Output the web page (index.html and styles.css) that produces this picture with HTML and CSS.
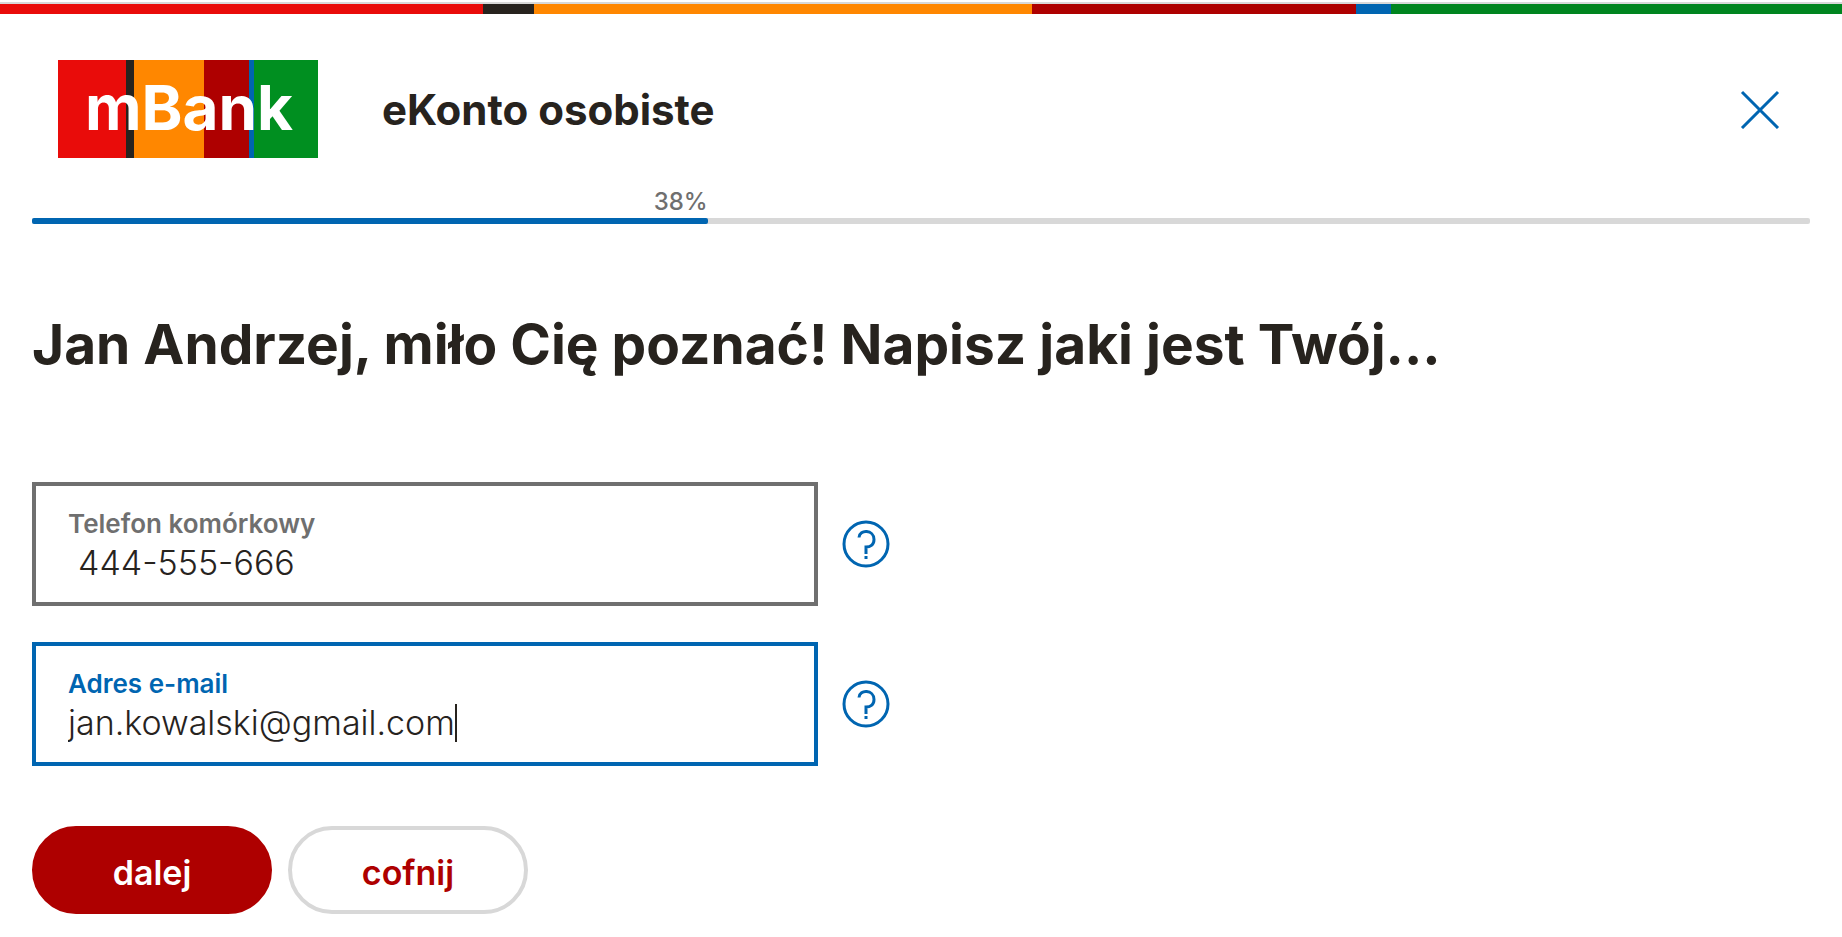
FILE: index.html
```html
<!DOCTYPE html>
<html lang="pl">
<head>
<meta charset="utf-8">
<meta name="viewport" content="width=device-width, initial-scale=1">
<title>eKonto osobiste</title>
<link rel="stylesheet" href="styles.css">
</head>
<body>
<div class="brand-bar"></div>
<header class="header">
  <svg class="logo" viewBox="0 0 260 98" role="img" aria-label="mBank">
    <rect width="68" height="98" fill="#e90c0a"/>
    <rect x="68" width="8" height="98" fill="#27231e"/>
    <rect x="76" width="70" height="98" fill="#ff8700"/>
    <rect x="146" width="45" height="98" fill="#ae0000"/>
    <rect x="191" width="5" height="98" fill="#0065b1"/>
    <rect x="196" width="64" height="98" fill="#008f20"/>
    <text class="logo-text" x="131" y="70" text-anchor="middle">mBank</text>
  </svg>
  <p class="product">eKonto osobiste</p>
  <button class="close" type="button" aria-label="Zamknij">
    <svg width="40" height="40" viewBox="0 0 40 40"><path d="M2 3 38 39M38 3 2 39"/></svg>
  </button>
</header>
<main class="content">
  <div class="progress">
    <div class="progress-label" style="width:38%">38%</div>
    <div class="progress-track"><div class="progress-fill" style="width:38%"></div></div>
  </div>
  <h1 class="title">Jan Andrzej, miło Cię poznać! Napisz jaki jest Twój...</h1>
  <form class="form">
    <div class="row">
      <div class="field">
        <label class="label" for="phone">Telefon komórkowy</label>
        <div class="entry entry-phone"><input class="value" id="phone" type="tel" value="444-555-666"></div>
      </div>
      <button class="help" type="button" aria-label="Pomoc: telefon komórkowy">
        <svg width="48" height="48" viewBox="0 0 48 48"><circle cx="24" cy="24" r="22"/><path d="M17 17.500C17.500 9 32 9.500 32 19.500C32 25 28 27 24 27V34M24 36V39"/></svg>
      </button>
    </div>
    <div class="row">
      <div class="field field-active">
        <label class="label" for="email">Adres e-mail</label>
        <div class="entry"><input class="value" id="email" type="email" value="jan.kowalski@gmail.com"><span class="caret"></span></div>
      </div>
      <button class="help" type="button" aria-label="Pomoc: adres e-mail">
        <svg width="48" height="48" viewBox="0 0 48 48"><circle cx="24" cy="24" r="22"/><path d="M17 17.500C17.500 9 32 9.500 32 19.500C32 25 28 27 24 27V34M24 36V39"/></svg>
      </button>
    </div>
    <div class="actions">
      <button class="button button-primary" type="submit">dalej</button>
      <button class="button" type="button">cofnij</button>
    </div>
  </form>
</main>
</body>
</html>
```

FILE: styles.css
```css
* { box-sizing: border-box; }
body {
  margin: 0;
  padding-top: 2px;
  background: #fff;
  color: #27231e;
  font-family: Inter, "Open Sans", sans-serif;
}
button, input { font: inherit; }
.brand-bar {
  height: 12px;
  border-top: 2px solid #d8d8d8;
  background: linear-gradient(to right, #e90c0a 26.22%, #27231e 26.22% 29%, #ff8700 29% 56.03%, #ae0000 56.03% 73.62%, #0065b1 73.62% 75.52%, #00851f 75.52%);
}
.header {
  display: flex;
  align-items: center;
  padding: 46px 58px 0;
}
.logo { width: 260px; height: 98px; flex: none; }
.logo-text { font-family: Inter, sans-serif; font-size: 62px; font-weight: 700; fill: #fff; }
.product {
  margin: 0 0 0 64px;
  padding-top: 2px;
  font-size: 42px;
  line-height: 52px;
  font-weight: 700;
}
.close, .help {
  display: flex;
  padding: 0;
  border: 0;
  background: none;
  cursor: pointer;
}
.close { margin-left: auto; margin-right: 4px; }
.close svg, .help svg { fill: none; stroke: #0065b1; stroke-width: 3; }
.content { padding: 0 32px; }
.progress { padding-top: 28px; }
.progress-label {
  color: #6f6f6f;
  font-size: 24px;
  line-height: 32px;
  font-weight: 500;
  text-align: right;
}
.progress-track { height: 6px; border-radius: 2px; background: #d8d8d8; }
.progress-fill { height: 6px; border-radius: 2px; background: #0065b1; }
.title {
  margin: 88px 0 106px;
  font-size: 55px;
  line-height: 64px;
  font-weight: 700;
}
.form { display: flex; flex-direction: column; gap: 36px; }
.row { display: flex; align-items: center; gap: 24px; }
.field {
  width: 786px;
  height: 124px;
  padding: 22px 32px 0;
  border: 4px solid #6f6f6f;
  color: #6f6f6f;
}
.field-active { border-color: #0065b1; color: #0065b1; }
.label { display: block; font-size: 26px; line-height: 32px; font-weight: 600; }
.entry { display: flex; align-items: center; height: 46px; }
.entry-phone { padding-left: 10px; }
.value {
  field-sizing: content;
  padding: 0;
  border: 0;
  outline: 0;
  background: none;
  color: #27231e;
  font-size: 34px;
  line-height: 40px;
  font-weight: 300;
}
.caret { width: 2px; height: 38px; background: #27231e; }
.actions { display: flex; gap: 16px; padding-top: 24px; }
.button {
  width: 240px;
  height: 88px;
  padding: 4px 0 0;
  border: 4px solid #d8d8d8;
  border-radius: 44px;
  background: #fff;
  color: #ae0000;
  font-size: 34px;
  font-weight: 600;
  cursor: pointer;
}
.button-primary { border-color: #ae0000; background: #ae0000; color: #fff; }
```
